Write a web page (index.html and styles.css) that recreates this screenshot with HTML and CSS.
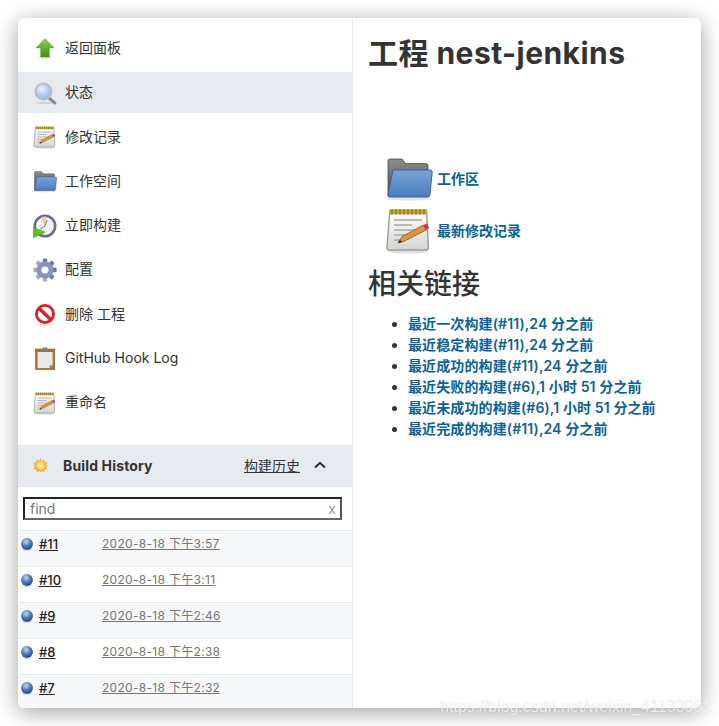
FILE: index.html
```html
<!DOCTYPE html>
<html lang="en">
<head>
    <meta charset="UTF-8">
    <meta name="viewport" content="width=device-width, initial-scale=1.0">
    <title>工程 nest-jenkins</title>
    <link rel="stylesheet" href="styles.css">
</head>
<body>

    <!-- 图标定义 -->
    <svg class="icon-defs" width="0" height="0">
        <defs>
            <linearGradient id="gArrow" x1="0" y1="0" x2="0" y2="1"><stop offset="0" stop-color="#8fd14f"/><stop offset="1" stop-color="#3f8f16"/></linearGradient>
            <linearGradient id="gFolder" x1="0" y1="0" x2="0" y2="1"><stop offset="0" stop-color="#7ba3d6"/><stop offset="1" stop-color="#4a7dbd"/></linearGradient>
            <linearGradient id="gBack" x1="0" y1="0" x2="0" y2="1"><stop offset="0" stop-color="#8b8b8b"/><stop offset="1" stop-color="#4f4f4f"/></linearGradient>
            <linearGradient id="gPad" x1="0" y1="0" x2="0" y2="1"><stop offset="0" stop-color="#ffffff"/><stop offset="1" stop-color="#d4d4d2"/></linearGradient>
            <linearGradient id="gGear" x1="0" y1="0" x2="0" y2="1"><stop offset="0" stop-color="#5f73b0"/><stop offset="1" stop-color="#b0abd4"/></linearGradient>
            <radialGradient id="gBall" cx="0.42" cy="0.3" r="0.75"><stop offset="0" stop-color="#c3d6ee"/><stop offset="0.5" stop-color="#4f7cb8"/><stop offset="1" stop-color="#1f3f78"/></radialGradient>
            <radialGradient id="gSun" cx="0.5" cy="0.5" r="0.5"><stop offset="0" stop-color="#fff7b8"/><stop offset="1" stop-color="#fbc53c"/></radialGradient>
            <radialGradient id="gLens" cx="0.4" cy="0.35" r="0.7"><stop offset="0" stop-color="#e8f0fa"/><stop offset="1" stop-color="#8fb3e0"/></radialGradient>

            <symbol id="i-notepad" viewBox="0 0 24 24">
                <ellipse cx="11.5" cy="22.6" rx="10" ry="1.2" fill="#000" opacity=".12"/>
                <path d="M2.4 2.5h18.4l.9 18.2q0 1.3-1.2 1.3H2.2q-1.2 0-1.2-1.3z" fill="url(#gPad)" stroke="#9a9a98" stroke-width=".7"/>
                <rect x="2.4" y="1.6" width="18.4" height="2.6" fill="#c9a93f"/>
                <path d="M3.5 1.6v2.6M5.5 1.6v2.6M7.5 1.6v2.6M9.5 1.6v2.6M11.5 1.6v2.6M13.5 1.6v2.6M15.5 1.6v2.6M17.5 1.6v2.6M19.5 1.6v2.6" stroke="#7d6a24" stroke-width=".6"/>
                <path d="M4.5 7h14M4.5 9.5h9M4.5 12h12M4.5 14.5h6M4.5 17h4" stroke="#a8a8a6" stroke-width=".8"/>
                <path d="M6.5 18.5l2-3.2L19 9.6l1.6 2.4L9.6 17.6z" fill="#d9973a" stroke="#8a5a1c" stroke-width=".4"/>
                <path d="M6.5 18.5l.9-1.6 1.2 1.1z" fill="#3a2a14"/>
                <path d="M19 9.6l1.8-.9 1.3 2.2-1.5 1.1z" fill="#e0313a"/>
            </symbol>

            <symbol id="i-folder" viewBox="0 0 24 24">
                <ellipse cx="12" cy="22.2" rx="11.5" ry="1.2" fill="#000" opacity=".1"/>
                <path d="M1.5 3.5q0-1 1-1h6l1.8 2.3h10.2q1 0 1 1v15.4H1.5z" fill="url(#gBack)" stroke="#4a4a4a" stroke-width=".4"/>
                <path d="M4 8h18.6q1 0 1 1l-1.1 11.3q-.1 1.2-1.2 1.2H2.4q-.9 0-.9-1z" fill="url(#gFolder)" stroke="#36609c" stroke-width=".5"/>
            </symbol>

            <symbol id="i-ball" viewBox="0 0 12 13">
                <ellipse cx="6" cy="12" rx="5" ry="1" fill="#000" opacity=".12"/>
                <circle cx="6" cy="6" r="5.9" fill="url(#gBall)"/>
            </symbol>
        </defs>
    </svg>

    <div class="window">

        <!-- 左侧栏 -->
        <div class="sidebar">
            <ul class="task-list">
                <li class="task">
                    <svg class="task-icon" viewBox="0 0 24 24">
                        <ellipse cx="12" cy="20.6" rx="7" ry="1" fill="#000" opacity=".14"/>
                        <path d="M12 1.6l9 9.3h-4.7v9H7.7v-9H3z" fill="url(#gArrow)" stroke="#4c9a1c" stroke-width=".5"/>
                    </svg>
                    <span>返回面板</span>
                </li>
                <li class="task active">
                    <svg class="task-icon" viewBox="0 0 24 24">
                        <ellipse cx="11" cy="22" rx="9" ry="1.2" fill="#000" opacity=".1"/>
                        <path d="M16 17l5.8 5" stroke="#8c8c8c" stroke-width="3" stroke-linecap="round"/>
                        <circle cx="10.4" cy="10.5" r="8" fill="url(#gLens)" stroke="#b4bcc8" stroke-width="2"/>
                    </svg>
                    <span>状态</span>
                </li>
                <li class="task">
                    <svg class="task-icon"><use href="#i-notepad"/></svg>
                    <span>修改记录</span>
                </li>
                <li class="task">
                    <svg class="task-icon"><use href="#i-folder"/></svg>
                    <span>工作空间</span>
                </li>
                <li class="task">
                    <svg class="task-icon" viewBox="0 0 24 24">
                        <circle cx="12" cy="12" r="10.2" fill="#f4f3f0" stroke="#6f6a94" stroke-width="2.6"/>
                        <path d="M12 12L8 3.4a9.4 9.4 0 0 1 5-.8z" fill="#e9cf8a"/>
                        <path d="M12 12l2-6M12 12L7 15" stroke="#5b5b5b" stroke-width=".8"/>
                        <path d="M.2 13.4L12.4 18 .2 24z" fill="#5fc21a" stroke="#3f8f16" stroke-width=".4"/>
                    </svg>
                    <span>立即构建</span>
                </li>
                <li class="task">
                    <svg class="task-icon" viewBox="0 0 24 24">
                        <g fill="url(#gGear)">
                            <rect x="9.8" y="0.4" width="4.4" height="23.2" rx="1"/>
                            <rect x="9.8" y="0.4" width="4.4" height="23.2" rx="1" transform="rotate(45 12 12)"/>
                            <rect x="9.8" y="0.4" width="4.4" height="23.2" rx="1" transform="rotate(90 12 12)"/>
                            <rect x="9.8" y="0.4" width="4.4" height="23.2" rx="1" transform="rotate(135 12 12)"/>
                        </g>
                        <circle cx="12" cy="12" r="6" fill="none" stroke="#8b90c0" stroke-width="5"/>
                        <circle cx="12" cy="12" r="3.6" fill="#fff"/>
                    </svg>
                    <span>配置</span>
                </li>
                <li class="task">
                    <svg class="task-icon" viewBox="0 0 24 24">
                        <ellipse cx="12" cy="22.6" rx="8" ry="1" fill="#000" opacity=".12"/>
                        <circle cx="12" cy="12" r="8.6" fill="#fff" stroke="#d4202c" stroke-width="2.8"/>
                        <path d="M6 6.2l12 11.6" stroke="#d4202c" stroke-width="3.4"/>
                    </svg>
                    <span>删除 工程</span>
                </li>
                <li class="task">
                    <svg class="task-icon" viewBox="0 0 24 24">
                        <rect x="2.4" y="3" width="19.4" height="20.6" fill="#a9742e" stroke="#80541c" stroke-width=".5"/>
                        <path d="M4.6 6h15v13.6l-3 2.4H4.6z" fill="#e9e9e7"/>
                        <path d="M19.6 19.6l-3 2.4v-3z" fill="#8f8f8d"/>
                        <path d="M7.2 5.6V3.4h2.6V1.4h4.4v2h2.6v2.2z" fill="#7e7e74"/>
                    </svg>
                    <span>GitHub Hook Log</span>
                </li>
                <li class="task">
                    <svg class="task-icon"><use href="#i-notepad"/></svg>
                    <span>重命名</span>
                </li>
            </ul>

            <!-- 构建历史 -->
            <div class="history-head">
                <svg class="sun" viewBox="0 0 16 16">
                    <path d="M8 .4l1.4 2.8L12 1.6l.2 3 3.2.2-1.6 2.7L16 8l-2.2 1.3 1.6 2.7-3.2.2-.2 3-2.6-1.6L8 15.6l-1.4-2-2.6 1.6-.2-3-3.2-.2 1.6-2.7L0 8l2.2-.5L.6 4.8l3.2-.2.2-3 2.6 1.6z" fill="#f7a93a"/>
                    <circle cx="8" cy="8" r="5" fill="url(#gSun)"/>
                </svg>
                <span class="history-title">Build History</span>
                <a class="history-link">构建历史</a>
                <svg class="chevron" viewBox="0 0 12 8"><path d="M1 6.6L6 1.8l5 4.8" fill="none" stroke="#222" stroke-width="1.9"/></svg>
            </div>

            <div class="search-wrap">
                <div class="search-box">
                    <span>find</span>
                    <span class="search-x">x</span>
                </div>
            </div>

            <div class="build-row">
                <svg class="ball"><use href="#i-ball"/></svg>
                <a class="build-num">#11</a>
                <a class="build-date">2020-8-18 下午3:57</a>
            </div>
            <div class="build-row">
                <svg class="ball"><use href="#i-ball"/></svg>
                <a class="build-num">#10</a>
                <a class="build-date">2020-8-18 下午3:11</a>
            </div>
            <div class="build-row">
                <svg class="ball"><use href="#i-ball"/></svg>
                <a class="build-num">#9</a>
                <a class="build-date">2020-8-18 下午2:46</a>
            </div>
            <div class="build-row">
                <svg class="ball"><use href="#i-ball"/></svg>
                <a class="build-num">#8</a>
                <a class="build-date">2020-8-18 下午2:38</a>
            </div>
            <div class="build-row">
                <svg class="ball"><use href="#i-ball"/></svg>
                <a class="build-num">#7</a>
                <a class="build-date">2020-8-18 下午2:32</a>
            </div>
        </div>

        <!-- 主内容区域 -->
        <div class="main">
            <h1>工程 nest-jenkins</h1>

            <div class="big-links">
                <div class="big-link">
                    <svg class="big-icon"><use href="#i-folder"/></svg>
                    <a>工作区</a>
                </div>
                <div class="big-link">
                    <svg class="big-icon"><use href="#i-notepad"/></svg>
                    <a>最新修改记录</a>
                </div>
            </div>

            <h2>相关链接</h2>
            <ul class="perma-links">
                <li><a>最近一次构建(#11),24 分之前</a></li>
                <li><a>最近稳定构建(#11),24 分之前</a></li>
                <li><a>最近成功的构建(#11),24 分之前</a></li>
                <li><a>最近失败的构建(#6),1 小时 51 分之前</a></li>
                <li><a>最近未成功的构建(#6),1 小时 51 分之前</a></li>
                <li><a>最近完成的构建(#11),24 分之前</a></li>
            </ul>
        </div>
    </div>

    <!-- 水印 -->
    <div class="watermark">https://blog.csdn.net/weixin_41133061</div>

</body>
</html>
```

FILE: styles.css
```css
html, body {
    height: 100%;
}

body {
    font-family: Inter, "Noto Sans CJK SC", sans-serif;
    font-size: 14px;
    color: #333333;
    background-color: #ffffff;
    margin: 0;
    padding: 18px;
    box-sizing: border-box;
    overflow: hidden;
    position: relative;
}

.icon-defs {
    position: absolute;
}

.window {
    display: flex;
    height: 690px;
    background-color: #ffffff;
    border-radius: 6px;
    overflow: hidden;
    box-shadow: 0 4px 22px rgba(0, 0, 0, 0.38);
}

/* 左侧栏 */
.sidebar {
    width: 334px;
    flex-shrink: 0;
    border-right: 1px solid #e6ebf0;
}

.task-list {
    list-style: none;
    margin: 0;
    padding: 10px 0 0;
    height: 427px;
    box-sizing: border-box;
}

.task {
    display: flex;
    align-items: center;
    gap: 8px;
    height: 41px;
    margin-bottom: 3.25px;
    padding-left: 15px;
}

.task span {
    line-height: 20px;
    padding-bottom: 1px;
}

.task.active {
    background-color: #e7ebef;
}

.task-icon {
    width: 24px;
    height: 24px;
    flex-shrink: 0;
}

/* 构建历史 */
.history-head {
    display: flex;
    align-items: center;
    height: 42px;
    padding: 0 0 2px 15px;
    box-sizing: border-box;
    background-color: #e7ebef;
}

.sun {
    width: 15px;
    height: 15px;
}

.history-title {
    font-weight: 700;
    letter-spacing: 0.15px;
    margin-left: 15px;
}

.history-link {
    margin-left: auto;
    text-decoration: underline;
}

.chevron {
    width: 12px;
    height: 8px;
    margin: 0 26px 0 14px;
}

.search-wrap {
    padding: 10px 10px 10px 5px;
}

.search-box {
    display: flex;
    justify-content: space-between;
    align-items: center;
    height: 23px;
    padding: 0 4px 0 5px;
    border: 2px solid #222222;
    border-bottom-color: #666666;
    border-right-color: #555555;
    color: #777777;
    box-sizing: border-box;
}

.search-x {
    color: #999999;
}

.build-row {
    display: flex;
    height: 36px;
    padding: 4px 0 0 3px;
    border-top: 1px solid #e6ebf0;
    box-sizing: border-box;
    background-color: #ffffff;
}

.build-row:nth-of-type(odd) {
    background-color: #f6f7f8;
}

.ball {
    width: 12px;
    height: 13px;
    margin-top: 3px;
}

.build-num {
    width: 63px;
    margin-left: 6px;
    font-size: 13px;
    font-weight: 500;
    color: #222222;
}

.build-num,
.build-date {
    align-self: flex-start;
    line-height: 18px;
    text-decoration: underline;
}

.build-date {
    font-size: 12px;
    letter-spacing: 0.3px;
    color: #777777;
}

/* 主内容区域 */
.main {
    flex: 1;
    padding: 0 15px;
}

h1 {
    margin: 16px 0 0;
    font-size: 30px;
    line-height: 38px;
    font-weight: 700;
    letter-spacing: 0.45px;
    color: #333333;
}

.big-links {
    margin: 0 0 0 17px;
    padding-top: 80px;
}

.big-link {
    display: flex;
    align-items: center;
    height: 52px;
    gap: 4px;
}

.big-icon {
    width: 48px;
    height: 48px;
}

a {
    color: inherit;
}

.big-link a,
.perma-links a {
    color: #0b6299;
    font-weight: 600;
}

h2 {
    margin: 10px 0 0;
    font-size: 28px;
    line-height: 36px;
    font-weight: 500;
    color: #333333;
}

.perma-links {
    margin: 11px 0 0;
    padding-left: 40px;
    line-height: 21px;
    letter-spacing: 0.12px;
}

/* 水印 */
.watermark {
    position: absolute;
    left: 440px;
    top: 697px;
    font-family: "Liberation Sans", sans-serif;
    font-size: 16px;
    line-height: 20px;
    color: rgba(255, 255, 255, 0.8);
    text-shadow: 0 0 1px rgba(0, 0, 0, 0.18);
    white-space: nowrap;
}
```
